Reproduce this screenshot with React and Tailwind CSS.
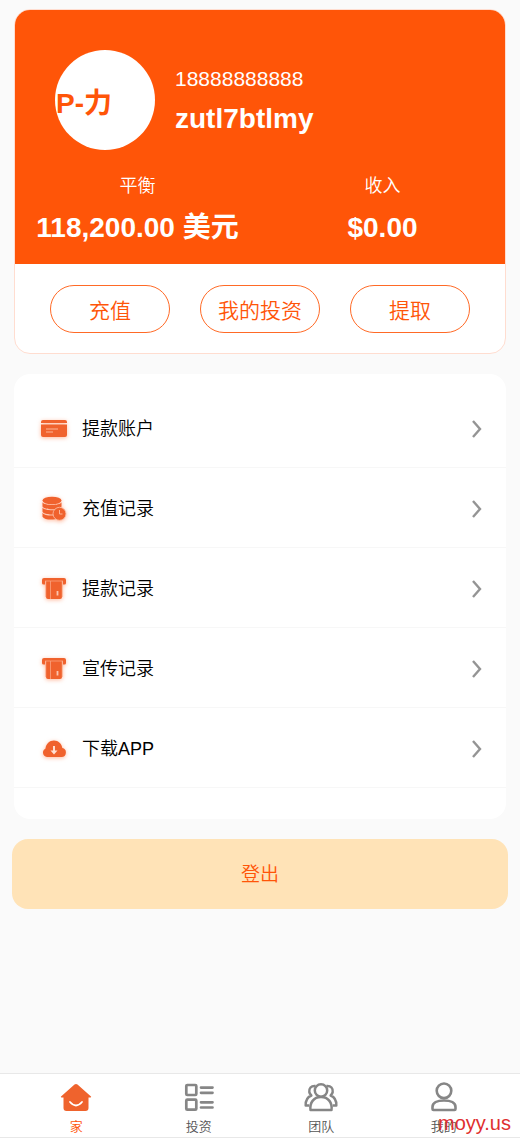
const accounts = [
  { label: "提款账户", icon: CardIcon },
  { label: "充值记录", icon: CoinsIcon },
  { label: "提款记录", icon: CashOutIcon },
  { label: "宣传记录", icon: CashOutIcon },
  { label: "下载APP", icon: CloudIcon },
];

const tabs = [
  { label: "家", icon: HomeIcon, active: true },
  { label: "投资", icon: ListIcon },
  { label: "团队", icon: TeamIcon },
  { label: "我的", icon: UserIcon },
];

const actions = ["充值", "我的投资", "提取"];

function CardIcon() {
  return (
    <svg viewBox="0 0 28 28" className="size-7" fill="#f0622d">
      <path d="M3 5h22a2 2 0 0 1 2 2v1H1V7a2 2 0 0 1 2-2Z" />
      <path d="M1 9.500h26V20a2 2 0 0 1-2 2H3a2 2 0 0 1-2-2Z" />
      <path d="M6 14h12M6 17h7" stroke="#fbb599" strokeWidth="1" />
    </svg>
  );
}

function CoinsIcon() {
  return (
    <svg viewBox="0 0 28 28" className="size-7" fill="#f0622d">
      <ellipse cx="12" cy="5.500" rx="9.500" ry="3.800" />
      <path d="M2.500 7.300c2 3.700 17 3.700 19 0v4.200c-2 3.700-17 3.700-19 0Z" />
      <path d="M2.500 12.500c2 3.700 17 3.700 19 0v4.200c-2 3.700-17 3.700-19 0Z" />
      <path d="M2.500 17.700c2 3.700 14 3.500 16 1v4.300c-4 2.300-14 2.300-16-1.300Z" />
      <circle cx="19.500" cy="18.800" r="6.500" stroke="#fbc4ad" strokeWidth="0.800" />
      <path d="M19.500 15v4h3" fill="none" stroke="#fbb599" strokeWidth="1" />
    </svg>
  );
}

function CashOutIcon() {
  return (
    <svg viewBox="0 0 28 28" className="size-7" fill="#f0622d">
      <path d="M4 3h20a2 2 0 0 1 2 2v3a1.500 1.500 0 0 1-1.500 1.500H23V6H5v3.500H3.500A1.500 1.500 0 0 1 2 8V5a2 2 0 0 1 2-2Z" />
      <path d="M6 5.500h16V22a2 2 0 0 1-2 2H8a2 2 0 0 1-2-2Z" />
      <path d="M5 6h18M10.500 6v18M5.800 6v16M22.200 6v16" stroke="#f9a27f" strokeWidth="0.800" />
      <path d="M17.500 16v4.500" stroke="#fbc4ad" strokeWidth="1.800" />
    </svg>
  );
}

function CloudIcon() {
  return (
    <svg viewBox="0 0 28 28" className="size-7">
      <path
        d="M7 22a4.500 4.500 0 0 1-1.500-8.500C6 9 9.500 5.500 14 5.500c4.300 0 7.800 3.300 8.300 7.600A4.500 4.500 0 0 1 21.500 22Z"
        fill="#f0622d"
      />
      <path d="M14 11v5" stroke="#ffe0d2" strokeWidth="2" />
      <path d="M10.500 15.500h7L14 19.500Z" fill="#ffe0d2" />
    </svg>
  );
}

function HomeIcon() {
  return (
    <svg viewBox="0 0 34 34" className="size-[34px]">
      <path
        d="M15.500 4.600a2.200 2.200 0 0 1 3 0L32 16.500c.3.400.1.900-.4.900H29.500V28a3 3 0 0 1-3 3h-19a3 3 0 0 1-3-3V17.400H2.400c-.5 0-.7-.500-.4-.900Z"
        fill="#ef632d"
      />
      <path d="M11 22q6 7 12 0" fill="none" stroke="#fff" strokeWidth="1.800" strokeLinecap="round" />
    </svg>
  );
}

function ListIcon() {
  return (
    <svg viewBox="0 0 34 34" className="size-[34px]" fill="none" stroke="#868686" strokeWidth="2.700">
      <rect x="4.300" y="5" width="10" height="10" rx="1" />
      <rect x="4.300" y="19.700" width="10" height="10" rx="1" />
      <path d="M19 7.600h11.500M19 12.800h11.500M19 22.300h11.500M19 27.500h11.500" strokeLinecap="round" />
    </svg>
  );
}

function TeamIcon() {
  return (
    <svg viewBox="0 0 34 34" className="size-[34px]" fill="none" stroke="#868686" strokeWidth="2.500">
      <circle cx="17" cy="10.500" r="6.200" />
      <path d="M6.500 30c-1-7 3-13 10.500-13s11.500 6 10.500 13Z" strokeLinejoin="round" />
      <path
        d="M11.500 6C7 5.500 4.800 8.500 5.300 12c.2 1.500 1 2.500 2 3.500-3.500 1.500-5.800 5.500-5.600 10H5M22.500 6c4.500-.5 6.700 2.500 6.200 6-.2 1.500-1 2.500-2 3.500 3.500 1.500 5.800 5.500 5.600 10H29"
        strokeLinejoin="round"
      />
    </svg>
  );
}

function UserIcon() {
  return (
    <svg viewBox="0 0 34 34" className="size-[34px]" fill="none" stroke="#868686" strokeWidth="2.600">
      <circle cx="17" cy="10.800" r="7.300" />
      <path d="M5.500 29v-2c0-4 4.500-6.500 11.500-6.500s11.500 2.500 11.500 6.500v2a1 1 0 0 1-1 1h-21a1 1 0 0 1-1-1Z" />
    </svg>
  );
}

function Chevron() {
  return (
    <svg viewBox="0 0 12 20" className="h-5 w-3" fill="none" stroke="#949494" strokeWidth="2.400">
      <path d="M2 2l7 8-7 8" />
    </svg>
  );
}

function Balance({ label, value }) {
  return (
    <div className="flex flex-col items-center whitespace-nowrap">
      <span className="text-[18px] leading-6 font-[350]">{label}</span>
      <span className="mt-3 text-[28px] leading-9 font-bold">{value}</span>
    </div>
  );
}

function ProfileCard() {
  return (
    <section className="overflow-hidden rounded-2xl border border-[#ffddd0] bg-white">
      <div className="bg-[#ff5508] pt-10 pb-[18px] text-white">
        <div className="flex items-center gap-5 px-10">
          <div className="flex size-[100px] shrink-0 items-center rounded-full bg-white pt-2 pl-px text-[28px] font-bold whitespace-nowrap text-[#ff5508]">
            P-力
          </div>
          <div className="min-w-0 pt-0.5">
            <p className="text-[21px] leading-8">18888888888</p>
            <h1 className="mt-1 text-[28px] leading-10 font-bold">zutl7btlmy</h1>
          </div>
        </div>
        <div className="mt-6 grid grid-cols-2">
          <Balance label="平衡" value="118,200.00 美元" />
          <Balance label="收入" value="$0.00" />
        </div>
      </div>
      <div className="grid grid-cols-3 gap-[30px] px-[35px] pt-[21px] pb-5">
        {actions.map((label) => (
          <button
            key={label}
            type="button"
            className="h-12 rounded-full border border-[#ff6a26] pt-1 text-[21px] font-[350] whitespace-nowrap text-[#ff5508]"
          >
            {label}
          </button>
        ))}
      </div>
    </section>
  );
}

function Menu() {
  return (
    <ul className="mt-5 rounded-2xl bg-white pt-[14px] pb-[31px]">
      {accounts.map(({ label, icon: Icon }) => (
        <li key={label} className="border-b border-[#f7f7f7]">
          <a href="#" className="flex h-[79px] items-center pt-0.5 pr-[23px] pl-[26px]">
            <span className="drop-shadow-[0_1px_2px_#ff8a5c99]">
              <Icon />
            </span>
            <span className="ml-[14px] flex-1 pt-0.5 text-[18px] font-[350] text-black">{label}</span>
            <Chevron />
          </a>
        </li>
      ))}
    </ul>
  );
}

function TabBar() {
  return (
    <nav className="sticky bottom-0 mt-auto border-y border-[#e8e8e8] bg-white px-[15px]">
      <div className="grid grid-cols-4">
        {tabs.map(({ label, icon: Icon, active }) => (
          <a key={label} href="#" className="flex flex-col items-center pt-1.5">
            <Icon />
            <span
              className={`mt-[3px] text-[13px] leading-5 font-[350] ${active ? "text-[#ff5508]" : "text-[#555]"}`}
            >
              {label}
            </span>
          </a>
        ))}
      </div>
      <span className="absolute right-[9px] bottom-0 text-[20px] leading-7 text-[#e03030]">moyy.us</span>
    </nav>
  );
}

export default function App() {
  return (
    <div className="flex min-h-screen flex-col bg-[#fafafa] font-['Liberation_Sans','Noto_Sans_CJK_SC',sans-serif]">
      <main className="px-3 pt-[9px] pb-10">
        <div className="px-0.5">
          <ProfileCard />
          <Menu />
        </div>
        <button
          type="button"
          className="mt-5 h-[70px] w-full rounded-2xl bg-[#ffe3b7] pt-0.5 text-[19px] font-[350] text-[#ff5508]"
        >
          登出
        </button>
      </main>
      <TabBar />
    </div>
  );
}
